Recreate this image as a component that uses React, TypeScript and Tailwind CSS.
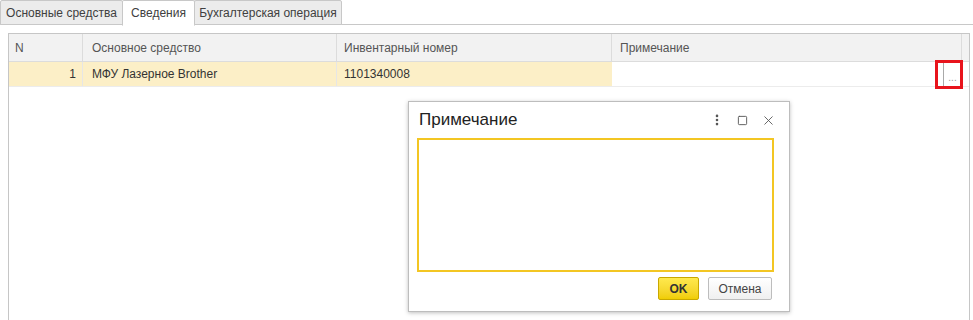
import { MoreVertical, Square, X } from "lucide-react";

const tabs = [
  { label: "Основные средства", active: false, w: "w-[123px]" },
  { label: "Сведения", active: true, w: "w-[73px]" },
  { label: "Бухгалтерская операция", active: false, w: "w-[148px]" },
];

const App = () => (
  <div className="relative w-[973px] h-[320px] bg-white overflow-hidden font-['Liberation_Sans',Arial,sans-serif] text-[12px] text-[#404040]">
    {/* tabs */}
    <div className="flex h-[25px] border-b border-[#c8c8c8]">
      {tabs.map((t) => (
        <div
          key={t.label}
          className={`${t.w} h-[25px] flex items-center justify-center border border-[#c8c8c8] -mr-px rounded-t-[2px] ${
            t.active ? "bg-white border-b-white h-[26px]" : "bg-[#ececec]"
          }`}
        >
          {t.label}
        </div>
      ))}
    </div>

    {/* table */}
    <div className="ml-[8px] mt-[8px] w-[962px] h-[300px] border-l border-t border-[#c6c6c6] border-r">
      <div className="flex h-[28px] bg-[#f2f2f2] border-b border-[#dcdcdc] text-[#555]">
        <div className="w-[74px] px-[6px] flex items-center border-r border-[#dcdcdc]">N</div>
        <div className="w-[254px] px-[9px] flex items-center border-r border-[#dcdcdc]">Основное средство</div>
        <div className="w-[275px] px-[7px] flex items-center border-r border-[#dcdcdc]">Инвентарный номер</div>
        <div className="w-[350px] px-[8px] flex items-center border-r border-[#dcdcdc]">Примечание</div>
        <div className="flex-1" />
      </div>
      <div className="flex h-[25px] border-b border-[#ececec] text-[#333]">
        <div className="w-[74px] pr-[6px] flex items-center justify-end bg-[#fcefc7] border-r border-[#e6e6e6]">1</div>
        <div className="w-[254px] px-[9px] flex items-center bg-[#fcefc7] border-r border-[#e6e6e6]">МФУ Лазерное Brother</div>
        <div className="w-[275px] px-[7px] flex items-center bg-[#fcefc7]">1101340008</div>
        <div className="w-[350px] flex justify-end items-stretch pr-px">
          <div className="relative w-[18px] flex items-end justify-center pb-[3px] border-l border-[#a9a9a9] text-[#999] text-[10px] leading-none">
            ...
            <div className="absolute -left-[9px] -top-[2px] w-[28px] h-[29px] border-[3px] border-[#e8141c]" />
          </div>
        </div>
        <div className="flex-1" />
      </div>
    </div>

    {/* dialog */}
    <div className="absolute left-[408px] top-[101px] w-[382px] h-[211px] bg-white border border-[#bdbdbd] shadow-[0_1px_4px_rgba(0,0,0,0.25)] flex flex-col pl-[8px] pr-[15px]">
      <div className="flex items-center h-[36px] pl-[2px]">
        <span className="flex-1 text-[17px] text-[#222]">Примечание</span>
        <div className="flex items-center gap-[13px] -mr-[2px] text-[#555]">
          <MoreVertical size={14} strokeWidth={2.5} />
          <Square size={11} strokeWidth={2} />
          <X size={15} strokeWidth={1.4} />
        </div>
      </div>
      <div className="h-[134px] border-2 border-[#f3c623]" />
      <div className="flex justify-end gap-[9px] mt-[5px] mr-[2px]">
        <button className="w-[41px] h-[23px] rounded-[2px] border border-[#c9a800] bg-gradient-to-b from-[#ffe94d] to-[#f0cd00] text-[#333] font-bold text-[12px]">
          OK
        </button>
        <button className="w-[64px] h-[23px] rounded-[2px] border border-[#bdbdbd] bg-gradient-to-b from-white to-[#f0f0f0] text-[#444] text-[12px]">
          Отмена
        </button>
      </div>
    </div>
  </div>
);

export default App;
